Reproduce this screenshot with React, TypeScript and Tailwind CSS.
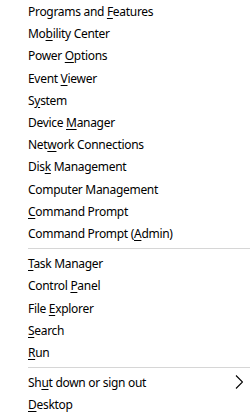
import React from 'react';

// Win+X power user menu

type Item = { pre: string; key: string; post: string; arrow?: boolean };

const groups: Item[][] = [
  [
    { pre: 'Programs and ', key: 'F', post: 'eatures' },
    { pre: 'Mo', key: 'b', post: 'ility Center' },
    { pre: 'Power ', key: 'O', post: 'ptions' },
    { pre: 'Event ', key: 'V', post: 'iewer' },
    { pre: 'S', key: 'y', post: 'stem' },
    { pre: 'Device ', key: 'M', post: 'anager' },
    { pre: 'Net', key: 'w', post: 'ork Connections' },
    { pre: 'Dis', key: 'k', post: ' Management' },
    { pre: 'Computer Mana', key: 'g', post: 'ement' },
    { pre: '', key: 'C', post: 'ommand Prompt' },
    { pre: 'Command Prompt (', key: 'A', post: 'dmin)' },
  ],
  [
    { pre: '', key: 'T', post: 'ask Manager' },
    { pre: 'Control ', key: 'P', post: 'anel' },
    { pre: 'File ', key: 'E', post: 'xplorer' },
    { pre: '', key: 'S', post: 'earch' },
    { pre: '', key: 'R', post: 'un' },
  ],
  [
    { pre: 'Sh', key: 'u', post: 't down or sign out', arrow: true },
    { pre: '', key: 'D', post: 'esktop' },
  ],
];

const MenuRow: React.FC<{ item: Item }> = ({ item }) => (
  <div className="flex items-center h-[22.2px] leading-[22px] pr-[7px]">
    <span className="flex-1 whitespace-nowrap tracking-[-0.3px]">
      {item.pre}
      <span className="underline underline-offset-[2px] decoration-1">{item.key}</span>
      {item.post}
    </span>
    {item.arrow && (
      <svg width="8" height="14" viewBox="0 0 8 14" className="mb-[2px]">
        <path d="M1 0.5 L7.5 7 L1 13.5" fill="none" stroke="#000" strokeWidth="1.1" />
      </svg>
    )}
  </div>
);

export default function App() {
  return (
    <div
      className="w-[250px] h-[418px] bg-white text-black text-[12px] pl-[28px] pt-[1px] overflow-hidden"
      style={{ fontFamily: '"Noto Sans", "Open Sans", sans-serif' }}
    >
      {groups.map((g, gi) => (
        <div key={gi}>
          {gi > 0 && <div className="h-px bg-[#d6d6d6] mt-[3px] mb-[4px]" />}
          {g.map((item, i) => (
            <MenuRow key={i} item={item} />
          ))}
        </div>
      ))}
    </div>
  );
}
